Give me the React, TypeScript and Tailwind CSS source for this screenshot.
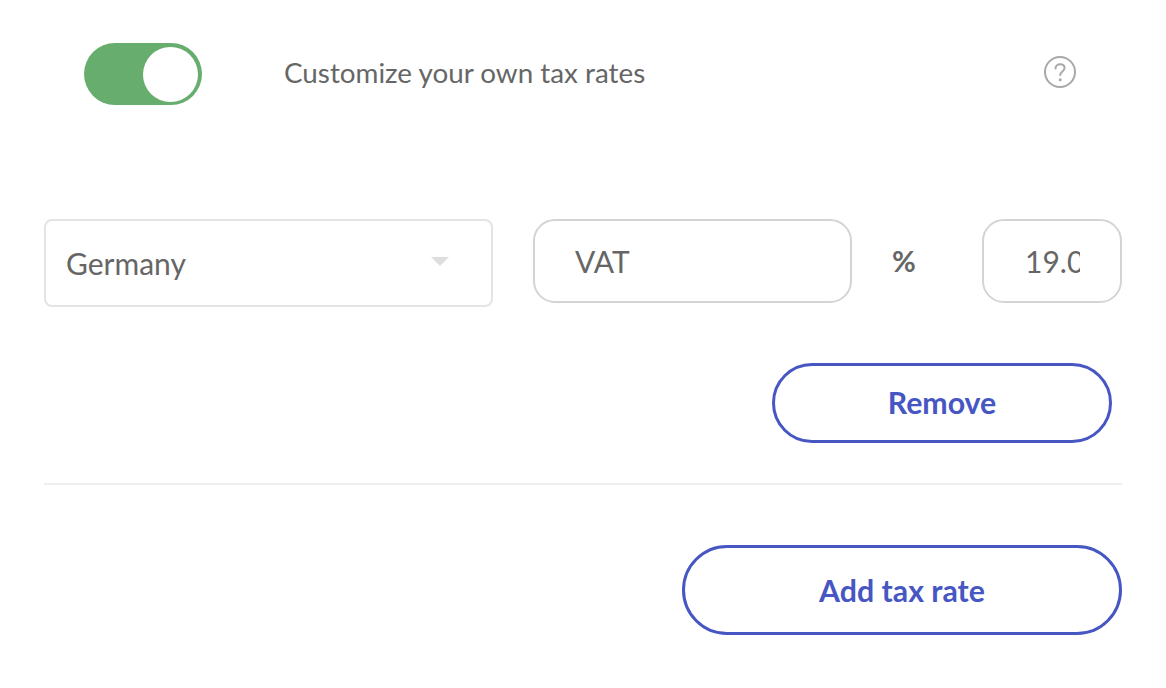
export default function App() {
  return (
    <div className="w-[1166px] h-[688px] bg-white overflow-hidden pl-[44px] pr-[44px] font-['Lato','Inter',sans-serif] text-[#666666]">
      <div className="flex items-center h-[62px] mt-[43px]">
        <div className="ml-[40px] w-[118px] h-[62px] rounded-full bg-[#67ad6d] flex items-center justify-end pr-[4px] shrink-0">
          <div className="w-[55px] h-[55px] rounded-full bg-white" />
        </div>
        <div className="ml-[82px] text-[27.8px] leading-[36px] flex-1 mt-[-2px]">Customize your own tax rates</div>
        <svg className="mr-[46px] mt-[-4px]" width="32" height="32" viewBox="0 0 32 32" fill="none">
          <circle cx="16" cy="16" r="15" stroke="#a8a8a8" strokeWidth="2" />
          <path d="M11.5 12.5c0-2.6 2-4.3 4.6-4.3 2.600 0 4.500 1.600 4.500 3.900 0 3.300-4.400 3.600-4.400 7" stroke="#a8a8a8" strokeWidth="2" strokeLinecap="round" />
          <circle cx="16.200" cy="23.700" r="1.500" fill="#a8a8a8" />
        </svg>
      </div>

      <div className="flex items-start mt-[114px]">
        <div className="w-[449px] h-[88px] border-2 border-[#e4e4e6] rounded-[8px] flex items-center justify-between pl-[20px] pr-[42px] shrink-0">
          <span className="text-[30px] leading-[36px]">Germany</span>
          <span className="w-0 h-0 border-l-[9px] border-r-[9px] border-t-[9px] border-l-transparent border-r-transparent border-t-[#dedede] mt-[-4px]" />
        </div>
        <div className="ml-[40px] w-[319px] h-[84px] border-2 border-[#d4d4d4] rounded-[22px] flex items-center pl-[40px] text-[30px] shrink-0">
          <span>VAT</span>
        </div>
        <div className="w-[130px] h-[84px] flex items-center text-[29px] font-bold shrink-0 pl-[40px]">
          <span className="mt-[-1px]">%</span>
        </div>
        <div className="w-[140px] h-[84px] border-2 border-[#d4d4d4] rounded-[22px] flex items-center pl-[41px] shrink-0">
          <div className="w-[55px] overflow-hidden text-[30px] whitespace-nowrap">19.00</div>
        </div>
      </div>

      <div className="flex justify-end mt-[56px] pr-[10px]">
        <button className="w-[340px] h-[80px] rounded-full border-[3px] border-[#4656c3] bg-white text-[#4656c3] text-[30.3px] font-bold">Remove</button>
      </div>

      <div className="h-[2px] bg-[#eeeeee] mt-[40px]" />

      <div className="flex justify-end mt-[60px]">
        <button className="w-[440px] h-[90px] rounded-full border-[3px] border-[#4656c3] bg-white text-[#4656c3] text-[30.3px] font-bold pt-[2px]">Add tax rate</button>
      </div>
    </div>
  );
}
